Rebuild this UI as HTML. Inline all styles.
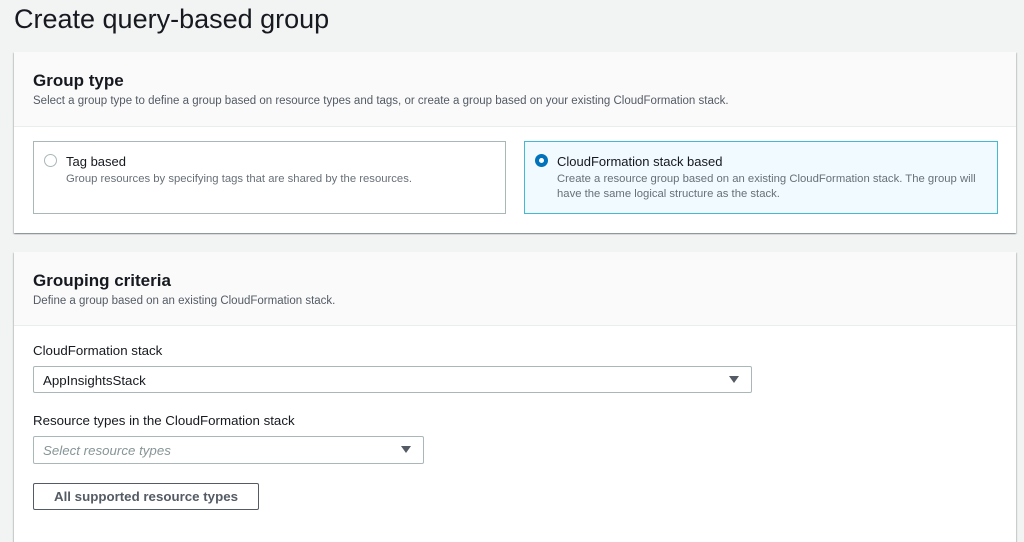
<!DOCTYPE html>
<html><head><style>
*{box-sizing:border-box;margin:0;padding:0}
body{width:1024px;height:533px;overflow:hidden;background:#f2f3f3;font-family:"Liberation Sans",sans-serif;color:#16191f;position:relative}
.a{position:absolute}
.card{position:absolute;left:14px;width:1002px;background:#fff;box-shadow:0 1px 1px 0 rgba(0,28,36,.3),1px 1px 1px 0 rgba(0,28,36,.15),-1px 1px 1px 0 rgba(0,28,36,.15)}
.hdr{position:absolute;left:0;top:0;width:100%;background:#fafafa;border-bottom:1px solid #eaeded}
h2{position:absolute;left:19px;font-size:17px;font-weight:bold}
.desc{position:absolute;left:19px;font-size:11.5px;color:#545b64}
.tile{position:absolute;border:1px solid #aab7b8;background:#fff}
.tile .t{position:absolute;left:32px;top:12px;font-size:13px}
.tile .d{position:absolute;left:32px;top:30px;font-size:11.3px;color:#687078;line-height:15px}
.radio{position:absolute;left:10px;top:12px;width:13px;height:13px;border-radius:50%;border:1px solid #aab7b8;background:#fff}
.lbl{position:absolute;left:33px;font-size:13.3px}
.sel{position:absolute;left:33px;border:1px solid #aab7b8;background:#fff;border-radius:2px;font-size:13.3px;padding:6px 9px}
.tri{position:absolute;right:12px;top:9px;width:0;height:0;border-left:5px solid transparent;border-right:5px solid transparent;border-top:7px solid #545b64}
</style></head><body>
<div class="a" style="left:14px;top:3px;font-size:27px;line-height:32px">Create query-based group</div>

<div class="card" style="top:52px;height:181px">
 <div class="hdr" style="height:75px"></div>
 <h2 style="top:19px">Group type</h2>
 <div class="desc" style="top:43px">Select a group type to define a group based on resource types and tags, or create a group based on your existing CloudFormation stack.</div>
 <div class="tile" style="left:19px;top:89px;width:473px;height:73px">
  <div class="radio"></div>
  <div class="t">Tag based</div>
  <div class="d">Group resources by specifying tags that are shared by the resources.</div>
 </div>
 <div class="tile" style="left:510px;top:89px;width:474px;height:73px;background:#f1faff;border-color:#44b9d6">
  <div class="radio" style="border:4px solid #0073bb"></div>
  <div class="t">CloudFormation stack based</div>
  <div class="d">Create a resource group based on an existing CloudFormation stack. The group will<br>have the same logical structure as the stack.</div>
 </div>
</div>

<div class="card" style="top:252px;height:290px">
 <div class="hdr" style="height:74px"></div>
 <h2 style="top:19px">Grouping criteria</h2>
 <div class="desc" style="top:43px">Define a group based on an existing CloudFormation stack.</div>
</div>
<div class="lbl" style="top:343px">CloudFormation stack</div>
<div class="sel" style="top:366px;width:719px;height:27px">AppInsightsStack<div class="tri"></div></div>
<div class="lbl" style="top:413px">Resource types in the CloudFormation stack</div>
<div class="sel" style="top:436px;width:391px;height:28px;color:#879596;font-style:italic">Select resource types<div class="tri"></div></div>
<div class="a" style="left:33px;top:483px;width:226px;height:27px;border:1px solid #545b64;border-radius:2px;background:#fff;font-size:13.3px;font-weight:bold;color:#545b64;text-align:center;line-height:26px">All supported resource types</div>
</body></html>
